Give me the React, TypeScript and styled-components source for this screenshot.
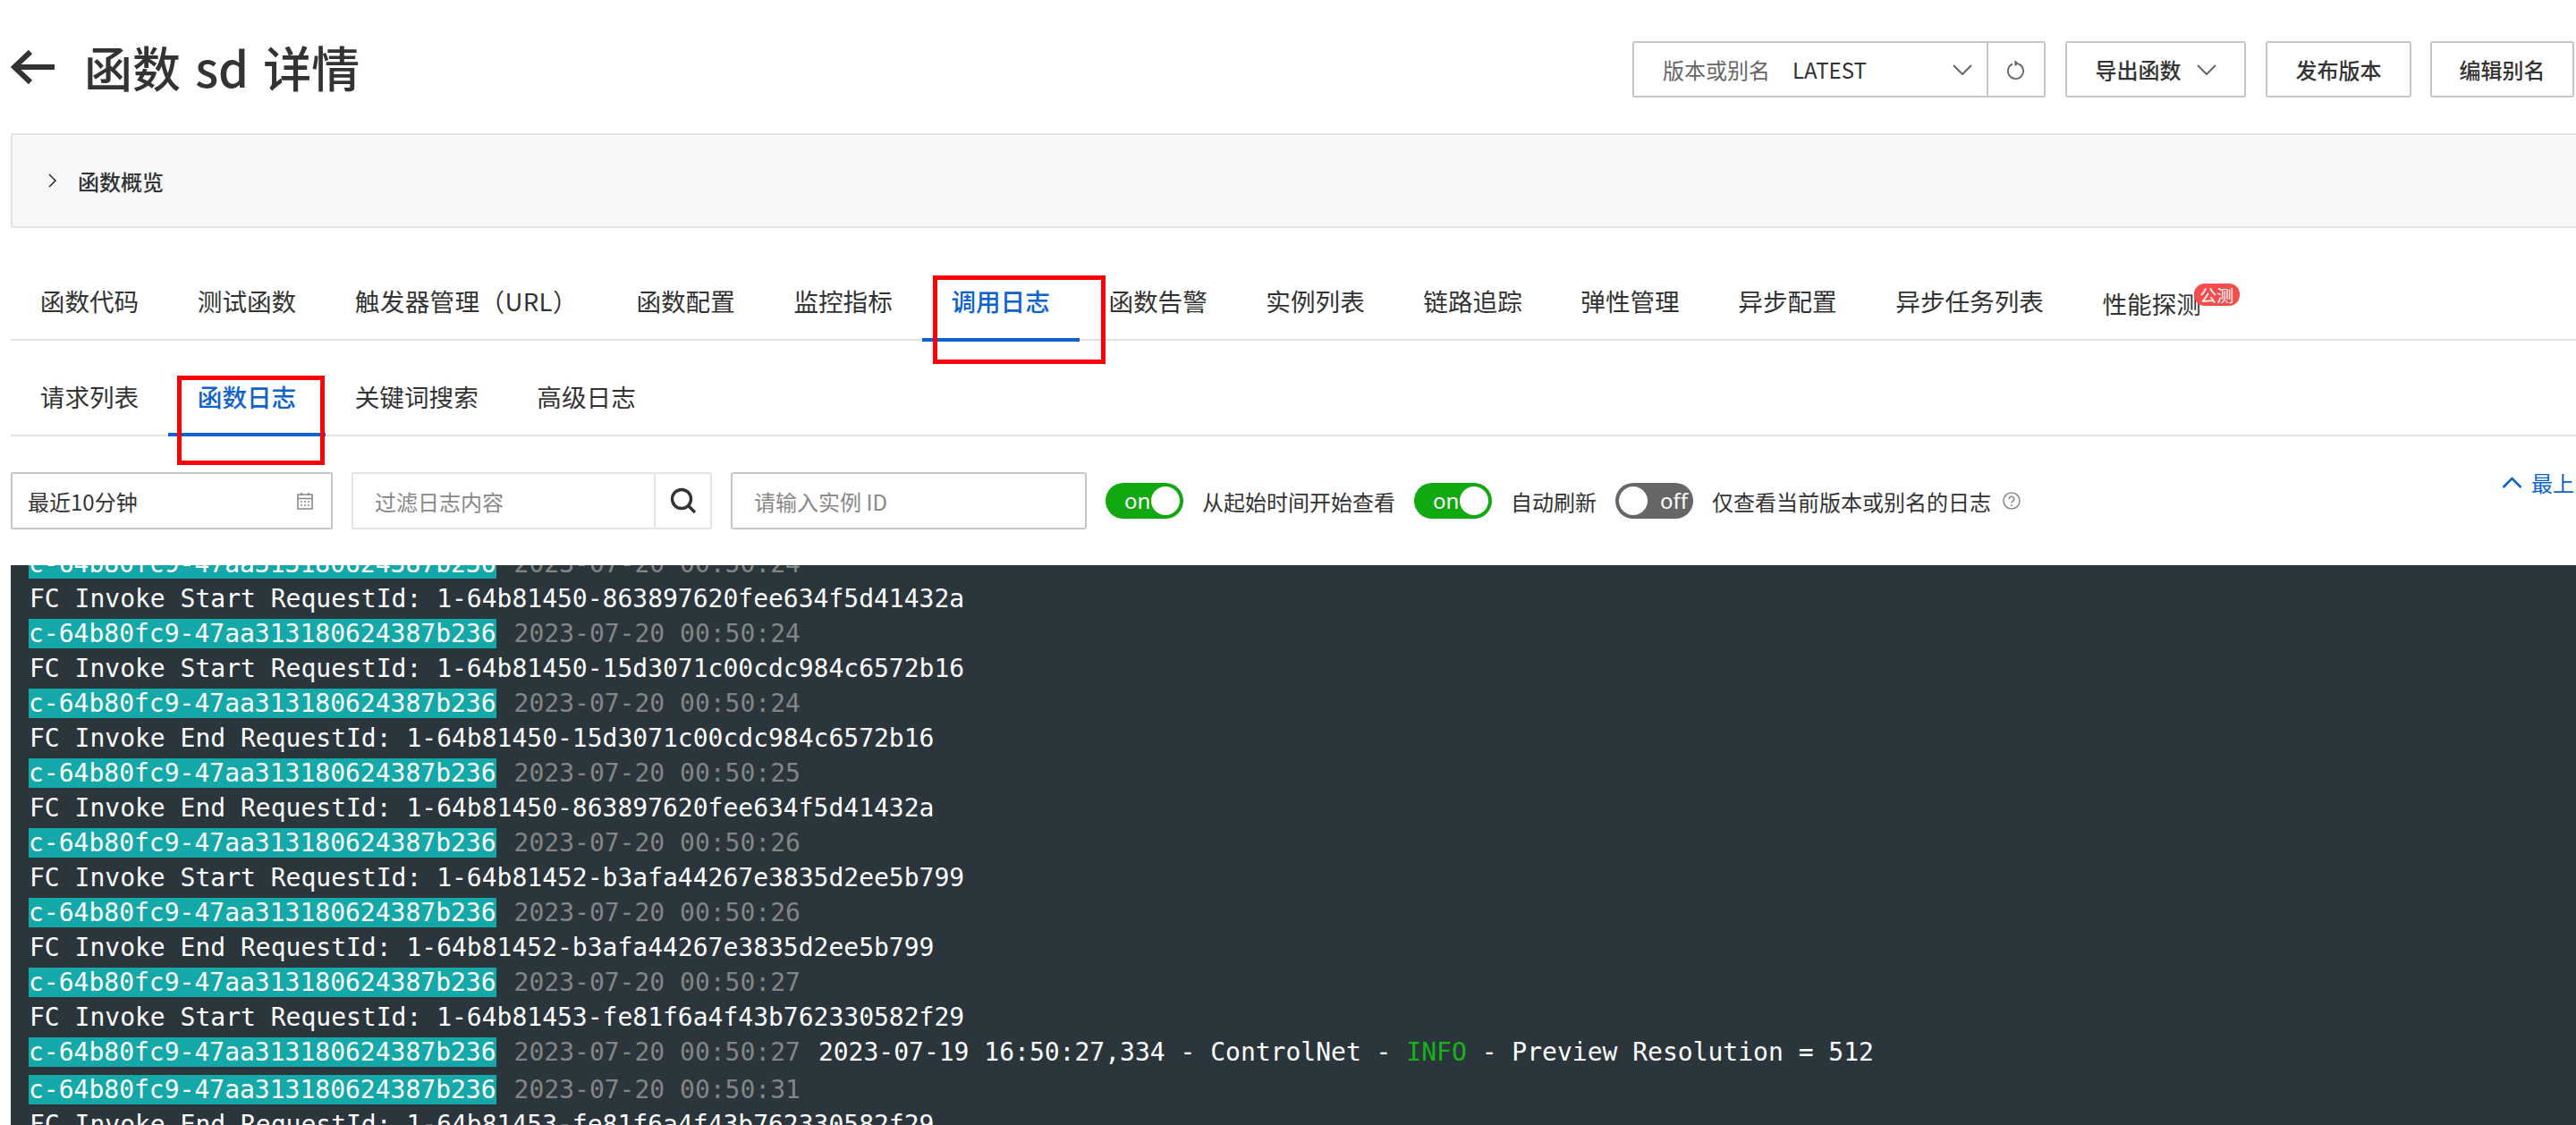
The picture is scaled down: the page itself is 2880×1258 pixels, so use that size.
import React from 'react'
import styled, { createGlobalStyle } from 'styled-components'

const GlobalStyle = createGlobalStyle`
  html, body {
    margin: 0;
    padding: 0;
    height: 100%;
    background: #fff;
    overflow: hidden;
  }
  * {
    box-sizing: border-box;
  }
  body {
    font-family: 'Noto Sans CJK SC', 'Noto Sans', sans-serif;
    color: #333;
  }
`

const Page = styled.div`
  display: flex;
  flex-direction: column;
  height: 1258px;
  width: 2880px;
  overflow: hidden;
`

const Header = styled.header`
  display: flex;
  align-items: center;
  justify-content: space-between;
  flex: none;
  height: 149px;
  padding: 0 2px 0 12px;
`

const TitleGroup = styled.div`
  display: flex;
  align-items: center;
  gap: 33px;
`

const Title = styled.h1`
  margin: 0;
  font-size: 54px;
  line-height: 60px;
  font-weight: 500;
  word-spacing: 4px;
  color: #333;
`

const Actions = styled.div`
  display: flex;
  align-items: center;
  margin-top: 6px;
`

const SelectBox = styled.div`
  display: flex;
  align-items: center;
  width: 398px;
  height: 63px;
  padding: 0 16px 0 32px;
  border: 2px solid #c4c6cc;
  border-radius: 3px 0 0 3px;
  font-size: 24px;
  color: #666;
`

const SelectValue = styled.span`
  margin-left: 25px;
  color: #333;
  flex: 1;
`

const RefreshButton = styled.button`
  display: flex;
  align-items: center;
  justify-content: center;
  width: 64px;
  height: 63px;
  margin-right: 22px;
  background: #fff;
  border: 2px solid #c4c6cc;
  border-left: 0;
  border-radius: 0 3px 3px 0;
  padding: 0;
`

const ActionButton = styled.button<{ $width: number; $gap?: number }>`
  display: flex;
  align-items: center;
  justify-content: center;
  gap: 17px;
  width: ${(p) => p.$width}px;
  height: 63px;
  margin-left: ${(p) => p.$gap ?? 0}px;
  padding: 0;
  background: #fff;
  border: 2px solid #c4c6cc;
  border-radius: 3px;
  font-family: inherit;
  font-size: 24px;
  font-weight: 500;
  color: #333;
`

const OverviewPanel = styled.section`
  display: flex;
  align-items: center;
  gap: 23px;
  flex: none;
  height: 106px;
  margin-left: 12px;
  padding-left: 40px;
  background: #f6f7f9;
  border: 2px solid #e3e4e6;
  border-right: 0;
  border-radius: 3px 0 0 3px;
  font-size: 24px;
  font-weight: 500;
  color: #333;
`

const TabBar = styled.nav<{ $top: number }>`
  display: flex;
  flex: none;
  margin: ${(p) => p.$top}px 0 0 12px;
  border-bottom: 2px solid #e3e3e3;
`

const Tab = styled.div<{ $active?: boolean; $drop: number; $spread?: boolean }>`
  position: relative;
  flex: none;
  height: ${(p) => 61 + p.$drop}px;
  margin-bottom: -${(p) => p.$drop}px;
  padding: 0 32.8px;
  font-size: 27.6px;
  line-height: 37px;
  letter-spacing: ${(p) => (p.$spread ? '0.35px' : '0')};
  white-space: nowrap;
  color: ${(p) => (p.$active ? '#0d62cb' : '#333')};
  font-weight: ${(p) => (p.$active ? 500 : 400)};
  border-bottom: 4px solid ${(p) => (p.$active ? '#0d62cb' : 'transparent')};
`

const Badge = styled.span`
  position: absolute;
  top: -1px;
  left: 135px;
  width: 51px;
  height: 25px;
  border-radius: 12px;
  background: #f54c4c;
  color: #fff;
  font-size: 19px;
  line-height: 25px;
  text-align: center;
`

const ProbeLabel = styled.span`
  position: relative;
  top: 3px;
`

const RedMark = styled.span<{
  $left: number
  $right: number
  $top: number
  $bottom: number
}>`
  position: absolute;
  left: ${(p) => p.$left}px;
  right: ${(p) => p.$right}px;
  top: ${(p) => p.$top}px;
  bottom: ${(p) => p.$bottom}px;
  border: 5px solid #fb0007;
  pointer-events: none;
`

const FilterRow = styled.div`
  display: flex;
  align-items: center;
  gap: 21px;
  flex: none;
  height: 64px;
  margin: 40px 0 40px 12px;
  font-size: 24px;
`

const DateField = styled.div`
  display: flex;
  align-items: center;
  justify-content: space-between;
  flex: none;
  width: 360px;
  height: 64px;
  padding: 0 20px 0 17px;
  border: 2px solid #c4c6cc;
  border-radius: 2px;
  color: #333;
`

const SearchField = styled.div`
  display: flex;
  flex: none;
  width: 403px;
  height: 64px;
  border: 2px solid #e3e4e6;
  border-radius: 3px;
`

const TextInput = styled.input<{ $width: number; $strong?: boolean }>`
  flex: none;
  width: ${(p) => p.$width}px;
  height: ${(p) => (p.$strong ? 64 : 60)}px;
  padding: 0 24px;
  background: transparent;
  border: ${(p) => (p.$strong ? '2px solid #c4c6cc' : '0')};
  border-radius: 3px;
  font-family: inherit;
  font-size: 24px;
  outline: none;

  &::placeholder {
    color: #888;
    opacity: 1;
  }
`

const SearchButton = styled.button`
  display: flex;
  align-items: center;
  justify-content: center;
  flex: 1;
  padding: 0;
  background: transparent;
  border: 0;
  border-left: 2px solid #e3e4e6;
`

const Switch = styled.div<{ $on?: boolean }>`
  display: flex;
  align-items: center;
  flex-direction: ${(p) => (p.$on ? 'row' : 'row-reverse')};
  justify-content: space-between;
  flex: none;
  width: 87px;
  height: 40px;
  padding: ${(p) => (p.$on ? '0 4px 0 21px' : '0 6px 0 4px')};
  border-radius: 20px;
  background: ${(p) => (p.$on ? '#12a812' : '#666')};
  color: #fff;
  font-family: 'Noto Sans', sans-serif;
  font-size: 24px;
  line-height: 40px;
`

const Knob = styled.span`
  width: 32px;
  height: 32px;
  border-radius: 50%;
  background: #fff;
`

const SwitchLabel = styled.span`
  flex: none;
  color: #333;
  white-space: nowrap;
`

const HelpGroup = styled.div`
  display: flex;
  align-items: center;
  gap: 13px;
`

const TopLink = styled.a`
  display: flex;
  align-items: center;
  gap: 10px;
  align-self: flex-start;
  margin: -9px 0 0 auto;
  padding-right: 2px;
  height: 40px;
  color: #0d62cb;
  white-space: nowrap;
`

const Terminal = styled.main`
  flex: 1;
  min-height: 0;
  margin-left: 12px;
  padding-left: 20px;
  overflow: hidden;
  background: #2b363c;
  font-family: 'DejaVu Sans Mono', 'Liberation Mono', monospace;
  font-size: 28px;
  color: #fff;
`

const LogList = styled.div`
  margin-top: -18px;
`

const SourceRow = styled.div`
  display: flex;
  height: 42px;
  white-space: pre;
`

const MessageRow = styled.div`
  height: 36px;
  margin-left: 1px;
  line-height: 28px;
  white-space: pre;
`

const Instance = styled.span`
  display: block;
  height: 33px;
  line-height: 33px;
  background: #14a8a8;
  color: #fff;
`

const Stamp = styled.span`
  margin-left: 20px;
  line-height: 33px;
  color: #858585;
`

const Output = styled.span`
  margin-left: 20px;
  line-height: 33px;
`

const Level = styled.span`
  color: #16b316;
`

const Chevron = ({ color = '#666', w = 22 }: { color?: string; w?: number }) => (
  <svg width={w} height={12} viewBox="0 0 22 12" fill="none">
    <path d="M1 1l10 10L21 1" stroke={color} strokeWidth="2" />
  </svg>
)

const BackArrow = () => (
  <svg width="49" height="40" viewBox="0 0 49 40" fill="none">
    <path d="M22 3L4 20l18 17M5 20h44" stroke="#333" strokeWidth="6" />
  </svg>
)

const RefreshIcon = () => (
  <svg width="20" height="24" viewBox="0 0 20 24" fill="none">
    <path d="M6 5.6a8.6 8.6 0 1 0 6.5-.2" stroke="#666" strokeWidth="1.8" />
    <path d="M8.5 1l4.5 4.2L8.5 8z" fill="#666" />
  </svg>
)

const CalendarIcon = () => (
  <svg width="18" height="20" viewBox="0 0 18 20" fill="none" stroke="#888" strokeWidth="1.6">
    <path d="M1 3h16v16H1zM1 7.5h16M5 1v3M13 1v3" />
    <path d="M4 11h2M8 11h2M12 11h2M4 15h2M8 15h2M12 15h2" />
  </svg>
)

const SearchIcon = () => (
  <svg width="30" height="30" viewBox="0 0 30 30" fill="none" stroke="#333" strokeWidth="3.4">
    <circle cx="13" cy="13" r="10.5" />
    <path d="M20.5 20.5L28 28" />
  </svg>
)

const HelpIcon = () => (
  <svg width="20" height="20" viewBox="0 0 20 20" fill="none">
    <circle cx="10" cy="10" r="9" stroke="#888" strokeWidth="1.5" />
    <path d="M7.2 8a2.8 2.8 0 1 1 4.2 2.4c-.9.5-1.4 1-1.4 2" stroke="#888" strokeWidth="1.5" />
    <circle cx="10" cy="15" r="1" fill="#888" />
  </svg>
)

const mainTabs = ['函数代码', '测试函数', '触发器管理（URL）', '函数配置', '监控指标', '调用日志', '函数告警', '实例列表', '链路追踪', '弹性管理', '异步配置', '异步任务列表']
const logTabs = ['请求列表', '函数日志', '关键词搜索', '高级日志']

const logRows = [
  { time: '00:50:24' },
  { text: 'FC Invoke Start RequestId: 1-64b81450-863897620fee634f5d41432a' },
  { time: '00:50:24' },
  { text: 'FC Invoke Start RequestId: 1-64b81450-15d3071c00cdc984c6572b16' },
  { time: '00:50:24' },
  { text: 'FC Invoke End RequestId: 1-64b81450-15d3071c00cdc984c6572b16' },
  { time: '00:50:25' },
  { text: 'FC Invoke End RequestId: 1-64b81450-863897620fee634f5d41432a' },
  { time: '00:50:26' },
  { text: 'FC Invoke Start RequestId: 1-64b81452-b3afa44267e3835d2ee5b799' },
  { time: '00:50:26' },
  { text: 'FC Invoke End RequestId: 1-64b81452-b3afa44267e3835d2ee5b799' },
  { time: '00:50:27' },
  { text: 'FC Invoke Start RequestId: 1-64b81453-fe81f6a4f43b762330582f29' },
  { time: '00:50:27', info: true },
  { time: '00:50:31' },
  { text: 'FC Invoke End RequestId: 1-64b81453-fe81f6a4f43b762330582f29' },
]

export default function App() {
  return (
    <Page>
      <GlobalStyle />
      <Header>
        <TitleGroup>
          <BackArrow />
          <Title>函数 sd 详情</Title>
        </TitleGroup>
        <Actions>
          <SelectBox>
            版本或别名
            <SelectValue>LATEST</SelectValue>
            <Chevron />
          </SelectBox>
          <RefreshButton>
            <RefreshIcon />
          </RefreshButton>
          <ActionButton $width={202}>
            导出函数
            <Chevron />
          </ActionButton>
          <ActionButton $width={163} $gap={22}>发布版本</ActionButton>
          <ActionButton $width={161} $gap={21}>编辑别名</ActionButton>
        </Actions>
      </Header>

      <OverviewPanel>
        <svg width="10" height="16" viewBox="0 0 10 16" fill="none">
          <path d="M1 1l7 7-7 7" stroke="#333" strokeWidth="1.6" />
        </svg>
        函数概览
      </OverviewPanel>

      <TabBar $top={63}>
        {mainTabs.map((name) => (
          <Tab key={name} $drop={3} $active={name === '调用日志'} $spread={name.includes('URL')}>
            {name}
            {name === '调用日志' && <RedMark $left={12} $right={-29} $top={-10} $bottom={-29} />}
          </Tab>
        ))}
        <Tab $drop={3}>
          <ProbeLabel>性能探测</ProbeLabel>
          <Badge>公测</Badge>
        </Tab>
      </TabBar>

      <TabBar $top={44}>
        {logTabs.map((name) => (
          <Tab key={name} $drop={2} $active={name === '函数日志'}>
            {name}
            {name === '函数日志' && <RedMark $left={10} $right={1} $top={-5} $bottom={-36} />}
          </Tab>
        ))}
      </TabBar>

      <FilterRow>
        <DateField>
          最近10分钟
          <CalendarIcon />
        </DateField>
        <SearchField>
          <TextInput $width={336} placeholder="过滤日志内容" />
          <SearchButton>
            <SearchIcon />
          </SearchButton>
        </SearchField>
        <TextInput $width={398} $strong placeholder="请输入实例 ID" />
        <Switch $on>
          on
          <Knob />
        </Switch>
        <SwitchLabel>从起始时间开始查看</SwitchLabel>
        <Switch $on>
          on
          <Knob />
        </Switch>
        <SwitchLabel>自动刷新</SwitchLabel>
        <Switch>
          off
          <Knob />
        </Switch>
        <HelpGroup>
          <SwitchLabel>仅查看当前版本或别名的日志</SwitchLabel>
          <HelpIcon />
        </HelpGroup>
        <TopLink>
          <svg width="23" height="13" viewBox="0 0 23 13" fill="none">
            <path d="M1.5 12L11.5 2l10 10" stroke="#0d62cb" strokeWidth="2.6" />
          </svg>
          最上
        </TopLink>
      </FilterRow>

      <Terminal>
        <LogList>
          {logRows.map((row, i) =>
            row.text ? (
              <MessageRow key={i}>{row.text}</MessageRow>
            ) : (
              <SourceRow key={i}>
                <Instance>c-64b80fc9-47aa313180624387b236</Instance>
                <Stamp>2023-07-20 {row.time}</Stamp>
                {row.info && (
                  <Output>
                    2023-07-19 16:50:27,334 - ControlNet - <Level>INFO</Level> - Preview Resolution = 512
                  </Output>
                )}
              </SourceRow>
            )
          )}
        </LogList>
      </Terminal>
    </Page>
  )
}
